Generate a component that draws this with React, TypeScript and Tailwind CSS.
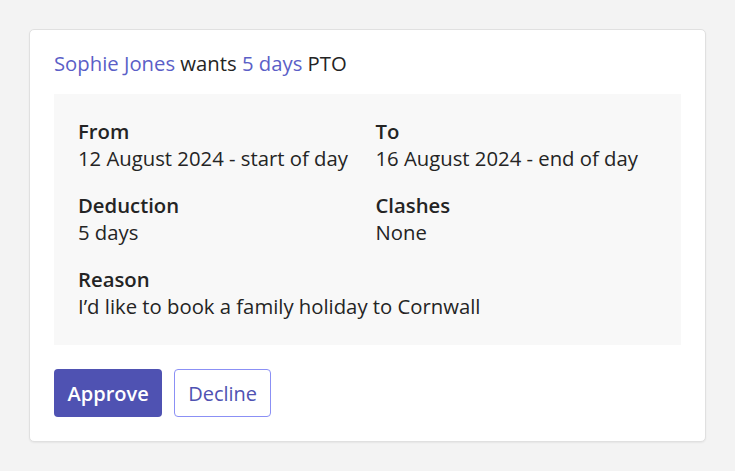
import React from 'react'

const FIELDS: { label: string; value: string; wide?: boolean }[] = [
  { label: 'From', value: '12 August 2024 - start of day' },
  { label: 'To', value: '16 August 2024 - end of day' },
  { label: 'Deduction', value: '5 days' },
  { label: 'Clashes', value: 'None' },
  { label: 'Reason', value: 'I’d like to book a family holiday to Cornwall', wide: true },
]

export default function App() {
  return (
    <div
      className="h-screen bg-[#f3f3f3] p-[29px] text-[#242424] text-[20.3px] leading-[27px]"
      style={{ fontFamily: '"Open Sans", "Noto Sans", sans-serif' }}
    >
      <div className="bg-white border border-[#e0e0e0] rounded-[5px] px-6 pt-[20px] pb-6 shadow-[0_1px_2px_rgba(0,0,0,0.06)]">
        {/* Header line */}
        <p>
          <span className="text-[#5b5fc7]">Sophie Jones</span> wants{' '}
          <span className="text-[#5b5fc7]">5 days</span> PTO
        </p>

        {/* Details panel */}
        <div className="mt-[17px] bg-[#f8f8f8] px-6 pt-6 pb-[25px] grid grid-cols-2 gap-x-4 gap-y-5">
          {FIELDS.map(({ label, value, wide }) => (
            <div key={label} className={wide ? 'col-span-2' : ''}>
              <p className="font-semibold">{label}</p>
              <p>{value}</p>
            </div>
          ))}
        </div>

        {/* Actions */}
        <div className="mt-6 flex gap-3">
          <button className="h-12 px-[13.5px] rounded-[4px] bg-[#4f52b2] text-white font-semibold text-[20px]">
            Approve
          </button>
          <button className="h-12 px-[13px] rounded-[4px] bg-white border border-[#8b90f5] text-[#4f52b2] text-[20px]">
            Decline
          </button>
        </div>
      </div>
    </div>
  )
}
